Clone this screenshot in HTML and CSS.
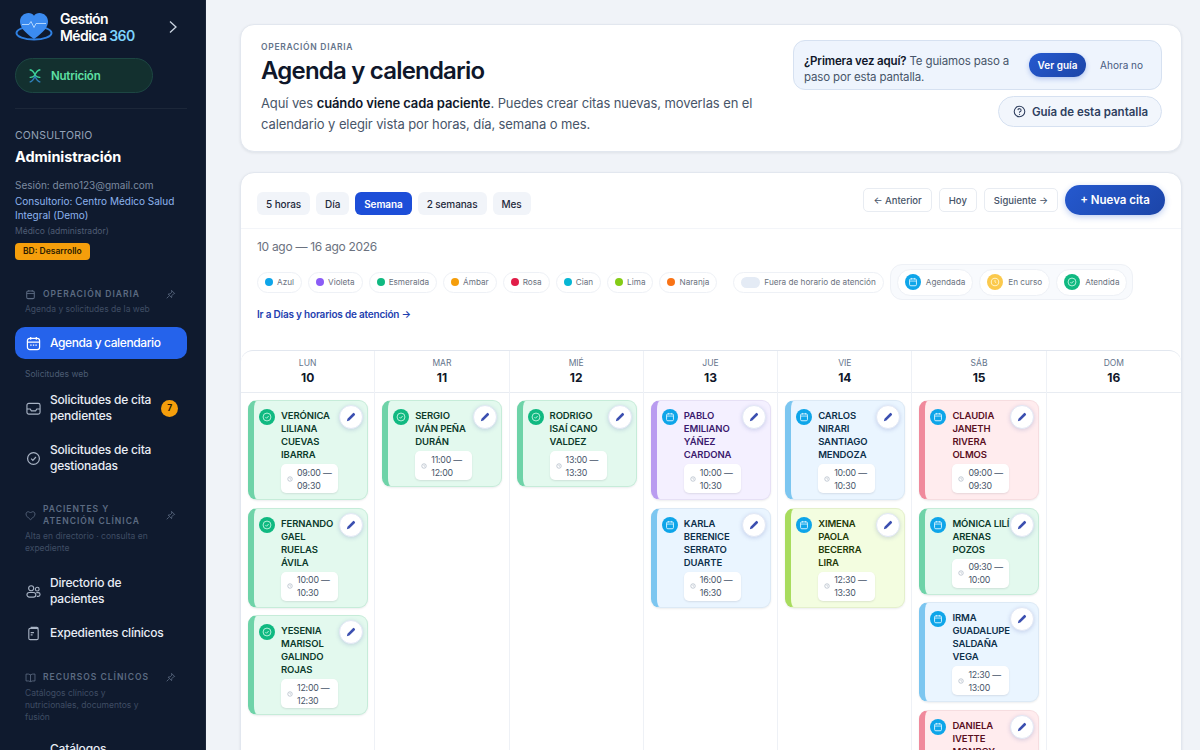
FILE: index.html
```html
<!DOCTYPE html>
<html lang="es">
<head>
    <meta charset="UTF-8">
    <meta name="viewport" content="width=device-width, initial-scale=1.0">
    <title>Agenda y calendario</title>
    <link rel="stylesheet" href="styles.css">
</head>
<body>
    <svg class="defs" width="0" height="0">
        <symbol id="i-cal" viewBox="0 0 16 16"><rect x="2.500" y="3" width="11" height="11" rx="2" fill="none" stroke="currentColor" stroke-width="1.500"/><path d="M2.500 6.500h11M5.500 1.500v2.500M10.500 1.500v2.500" fill="none" stroke="currentColor" stroke-width="1.300"/></symbol>
        <symbol id="i-pin" viewBox="0 0 16 16"><path d="M9.500 2l4.500 4.500-1.500.5-2.500 2.500-.5 3-5-5 3-.5L10 4.500zM5.500 10.500L2.500 13.500" fill="none" stroke="currentColor" stroke-width="1.200" stroke-linejoin="round"/></symbol>
        <symbol id="i-check" viewBox="0 0 16 16"><circle cx="8" cy="8" r="6.300" fill="none" stroke="currentColor" stroke-width="1.300"/><path d="M5.500 8.200l1.800 1.800 3.300-3.600" fill="none" stroke="currentColor" stroke-width="1.300"/></symbol>
        <symbol id="i-pencil" viewBox="0 0 16 16"><path d="M2.500 13.500l.8-3.300L10.500 3a1.300 1.300 0 0 1 1.900 0l.6.6a1.300 1.300 0 0 1 0 1.900l-7.200 7.200z" fill="currentColor"/></symbol>
        <symbol id="i-clock" viewBox="0 0 16 16"><circle cx="8" cy="8" r="6" fill="none" stroke="currentColor" stroke-width="1.700"/><path d="M8 4.800V8l2 1.300" fill="none" stroke="currentColor" stroke-width="1.500"/></symbol>
    </svg>

    <div class="app">
        <aside class="sidebar">
            <div class="brand">
                <svg class="brand-logo" viewBox="0 0 38 30">
                    <ellipse cx="19" cy="21" rx="17.500" ry="6.500" fill="none" stroke="#2f7fe0" stroke-width="2"/>
                    <path d="M19 27C9 20 5 15 5 9.500c0-5 4-8.500 8.500-8.500 2.400 0 4.400 1 5.500 2.700C20.100 2 22.100 1 24.500 1 29 1 33 4.500 33 9.500 33 15 29 20 19 27z" fill="#3b8bf0"/>
                    <path d="M7 12.500h7l2-3 3 6 2-4h10" fill="none" stroke="#bcdcff" stroke-width=".9"/>
                </svg>
                <div class="brand-name">Gestión<br>Médica <span>360</span></div>
                <svg class="brand-chevron" viewBox="0 0 10 14"><path d="M2 1.500L8 7l-6 5.500" fill="none" stroke="#cbd5e1" stroke-width="1.300"/></svg>
            </div>
            <div class="module-pill">
                <svg viewBox="0 0 18 18" width="16" height="16">
                    <path d="M3 2c3 .5 5 3 6 6 1-3 3-5.500 6-6M9 8c-2 2-4 3-6 2.500M9 8c2 2 4 3 6 2.500" fill="none" stroke="#3fd39a" stroke-width="1.500"/>
                    <path d="M9 9c-1 3-3 6-6 7M9 9c1 3 3 6 6 7" fill="none" stroke="#2f7fb8" stroke-width="1.500"/>
                </svg>
                <span>Nutrición</span>
            </div>
            <hr class="side-rule">

            <div class="clinic-label">CONSULTORIO</div>
            <div class="clinic-role">Administración</div>
            <div class="clinic-session">Sesión: demo123@gmail.com</div>
            <div class="clinic-name">Consultorio: Centro Médico Salud Integral (Demo)</div>
            <div class="clinic-user">Médico (administrador)</div>
            <div class="db-badge">BD: Desarrollo</div>

            <div class="nav-group">
                <div class="nav-head">
                    <svg class="nav-head-icon"><use href="#i-cal"/></svg>
                    <span>Operación diaria</span>
                    <svg class="nav-pin"><use href="#i-pin"/></svg>
                </div>
                <p class="nav-sub">Agenda y solicitudes de la web</p>
                <a class="nav-item active">
                    <svg viewBox="0 0 16 16"><rect x="1.500" y="2.500" width="13" height="12" rx="2.500" fill="none" stroke="currentColor" stroke-width="1.300"/><path d="M1.500 6.500h13M5 1v3M11 1v3" fill="none" stroke="currentColor" stroke-width="1.300"/><path d="M4.500 9h1.500v1.500H4.500zM7.300 9h1.500v1.500H7.300zM10 9h1.500v1.500H10z" fill="currentColor"/></svg>
                    <span>Agenda y calendario</span>
                </a>
                <p class="nav-sub nav-sub-item">Solicitudes web</p>
                <a class="nav-item two">
                    <svg viewBox="0 0 16 16"><rect x="1" y="2.500" width="14" height="11.500" rx="2" fill="none" stroke="currentColor" stroke-width="1.200"/><path d="M1 8.500h3.500l1.200 2h4.600l1.200-2H15" fill="none" stroke="currentColor" stroke-width="1.200"/></svg>
                    <span>Solicitudes de cita pendientes</span>
                    <b class="count">7</b>
                </a>
                <a class="nav-item two">
                    <svg><use href="#i-check"/></svg>
                    <span>Solicitudes de cita gestionadas</span>
                </a>
            </div>

            <div class="nav-group patients">
                <div class="nav-head">
                    <svg class="nav-head-icon" viewBox="0 0 16 16"><path d="M8 14C3.500 10.500 1.500 8.500 1.500 5.800 1.500 3.800 3 2.500 4.800 2.500 6.200 2.500 7.300 3.200 8 4.400 8.700 3.200 9.800 2.500 11.200 2.500c1.800 0 3.300 1.300 3.300 3.300 0 2.700-2 4.700-6.500 8.200z" fill="none" stroke="currentColor" stroke-width="1.200"/></svg>
                    <span>Pacientes y atención clínica</span>
                    <svg class="nav-pin"><use href="#i-pin"/></svg>
                </div>
                <p class="nav-sub">Alta en directorio · consulta en expediente</p>
                <a class="nav-item two first">
                    <svg viewBox="0 0 16 16"><circle cx="5.500" cy="4.500" r="2.700" fill="none" stroke="currentColor" stroke-width="1.200"/><circle cx="12" cy="5.500" r="2" fill="none" stroke="currentColor" stroke-width="1.200"/><rect x="1" y="9" width="9.500" height="5" rx="2.500" fill="none" stroke="currentColor" stroke-width="1.200"/><path d="M11 9.200h2a2 2 0 0 1 0 4h-1.500" fill="none" stroke="currentColor" stroke-width="1.200"/></svg>
                    <span>Directorio de pacientes</span>
                </a>
                <a class="nav-item">
                    <svg viewBox="0 0 16 16"><rect x="3" y="2.500" width="10" height="12" rx="1.500" fill="none" stroke="currentColor" stroke-width="1.200"/><path d="M5 1.500h6.500A1.500 1.500 0 0 1 13 3M5 7h3.500M5 9.500h2" fill="none" stroke="currentColor" stroke-width="1.200"/></svg>
                    <span>Expedientes clínicos</span>
                </a>
            </div>

            <div class="nav-group resources">
                <div class="nav-head">
                    <svg class="nav-head-icon" viewBox="0 0 16 16"><path d="M8 4C6.500 3 4 2.800 1.500 3v10C4 12.800 6.500 13 8 14c1.500-1 4-1.200 6.500-1V3C12 2.800 9.500 3 8 4zM8 4v10" fill="none" stroke="currentColor" stroke-width="1.200"/></svg>
                    <span>Recursos clínicos</span>
                    <svg class="nav-pin"><use href="#i-pin"/></svg>
                </div>
                <p class="nav-sub">Catálogos clínicos y nutricionales, documentos y fusión</p>
                <a class="nav-item two first"><svg></svg><span>Catálogos</span></a>
            </div>
        </aside>

        <main class="content">
            <section class="hero">
                <div class="hero-text">
                    <div class="eyebrow">OPERACIÓN DIARIA</div>
                    <h1>Agenda y calendario</h1>
                    <p>Aquí ves <strong>cuándo viene cada paciente</strong>. Puedes crear citas nuevas, moverlas en el calendario y elegir vista por horas, día, semana o mes.</p>
                </div>
                <div class="hero-side">
                    <div class="guide-box">
                        <p><strong>¿Primera vez aquí?</strong> Te guiamos paso a paso por esta pantalla.</p>
                        <button class="btn-guide">Ver guía</button>
                        <button class="btn-later">Ahora no</button>
                    </div>
                    <button class="btn-screen-guide">
                        <svg viewBox="0 0 16 16" width="13" height="13"><circle cx="8" cy="8" r="6.500" fill="none" stroke="currentColor" stroke-width="1.300"/><path d="M6 6.300A2 2 0 1 1 8 8.500v1" fill="none" stroke="currentColor" stroke-width="1.300"/><circle cx="8" cy="11.500" r=".8" fill="currentColor"/></svg>
                        Guía de esta pantalla
                    </button>
                </div>
            </section>

            <section class="panel">
                <div class="toolbar">
                    <div class="tabs">
                        <button class="tab">5 horas</button>
                        <button class="tab">Día</button>
                        <button class="tab active">Semana</button>
                        <button class="tab">2 semanas</button>
                        <button class="tab">Mes</button>
                    </div>
                    <div class="actions">
                        <button class="btn-nav">← Anterior</button>
                        <button class="btn-nav">Hoy</button>
                        <button class="btn-nav">Siguiente →</button>
                        <button class="btn-new">+ Nueva cita</button>
                    </div>
                </div>

                <div class="range">10 ago — 16 ago 2026</div>

                <div class="legend">
                    <span class="chip"><i style="background:#0ea5e9"></i>Azul</span>
                    <span class="chip"><i style="background:#8b5cf6"></i>Violeta</span>
                    <span class="chip"><i style="background:#10b981"></i>Esmeralda</span>
                    <span class="chip"><i style="background:#f59e0b"></i>Ámbar</span>
                    <span class="chip"><i style="background:#e11d48"></i>Rosa</span>
                    <span class="chip"><i style="background:#06b6d4"></i>Cian</span>
                    <span class="chip"><i style="background:#84cc16"></i>Lima</span>
                    <span class="chip"><i style="background:#f97316"></i>Naranja</span>
                    <span class="chip chip-off"><i class="off-swatch"></i>Fuera de horario de atención</span>
                    <div class="status-group">
                        <span class="chip"><b class="status blue"><svg><use href="#i-cal"/></svg></b>Agendada</span>
                        <span class="chip"><b class="status amber"><svg><use href="#i-clock"/></svg></b>En curso</span>
                        <span class="chip"><b class="status green"><svg><use href="#i-check"/></svg></b>Atendida</span>
                    </div>
                </div>

                <a class="hours-link">Ir a Días y horarios de atención →</a>

                <div class="calendar">
                    <div class="day">
                        <div class="day-head"><small>LUN</small><strong>10</strong></div>
                        <div class="day-body">
                            <article class="appt emerald">
                                <b class="status green"><svg><use href="#i-check"/></svg></b>
                                <div class="appt-body"><h3>VERÓNICA<br>LILIANA<br>CUEVAS<br>IBARRA</h3><div class="time"><svg><use href="#i-clock"/></svg><span>09:00 —<br>09:30</span></div></div>
                                <button class="edit"><svg><use href="#i-pencil"/></svg></button>
                            </article>
                            <article class="appt emerald">
                                <b class="status green"><svg><use href="#i-check"/></svg></b>
                                <div class="appt-body"><h3>FERNANDO<br>GAEL<br>RUELAS<br>ÁVILA</h3><div class="time"><svg><use href="#i-clock"/></svg><span>10:00 —<br>10:30</span></div></div>
                                <button class="edit"><svg><use href="#i-pencil"/></svg></button>
                            </article>
                            <article class="appt emerald">
                                <b class="status green"><svg><use href="#i-check"/></svg></b>
                                <div class="appt-body"><h3>YESENIA<br>MARISOL<br>GALINDO<br>ROJAS</h3><div class="time"><svg><use href="#i-clock"/></svg><span>12:00 —<br>12:30</span></div></div>
                                <button class="edit"><svg><use href="#i-pencil"/></svg></button>
                            </article>
                        </div>
                    </div>
                    <div class="day">
                        <div class="day-head"><small>MAR</small><strong>11</strong></div>
                        <div class="day-body">
                            <article class="appt emerald">
                                <b class="status green"><svg><use href="#i-check"/></svg></b>
                                <div class="appt-body"><h3>SERGIO<br>IVÁN PEÑA<br>DURÁN</h3><div class="time"><svg><use href="#i-clock"/></svg><span>11:00 —<br>12:00</span></div></div>
                                <button class="edit"><svg><use href="#i-pencil"/></svg></button>
                            </article>
                        </div>
                    </div>
                    <div class="day">
                        <div class="day-head"><small>MIÉ</small><strong>12</strong></div>
                        <div class="day-body">
                            <article class="appt emerald">
                                <b class="status green"><svg><use href="#i-check"/></svg></b>
                                <div class="appt-body"><h3>RODRIGO<br>ISAÍ CANO<br>VALDEZ</h3><div class="time"><svg><use href="#i-clock"/></svg><span>13:00 —<br>13:30</span></div></div>
                                <button class="edit"><svg><use href="#i-pencil"/></svg></button>
                            </article>
                        </div>
                    </div>
                    <div class="day">
                        <div class="day-head"><small>JUE</small><strong>13</strong></div>
                        <div class="day-body">
                            <article class="appt violet">
                                <b class="status blue"><svg><use href="#i-cal"/></svg></b>
                                <div class="appt-body"><h3>PABLO<br>EMILIANO<br>YÁÑEZ<br>CARDONA</h3><div class="time"><svg><use href="#i-clock"/></svg><span>10:00 —<br>10:30</span></div></div>
                                <button class="edit"><svg><use href="#i-pencil"/></svg></button>
                            </article>
                            <article class="appt azure">
                                <b class="status blue"><svg><use href="#i-cal"/></svg></b>
                                <div class="appt-body"><h3>KARLA<br>BERENICE<br>SERRATO<br>DUARTE</h3><div class="time"><svg><use href="#i-clock"/></svg><span>16:00 —<br>16:30</span></div></div>
                                <button class="edit"><svg><use href="#i-pencil"/></svg></button>
                            </article>
                        </div>
                    </div>
                    <div class="day">
                        <div class="day-head"><small>VIE</small><strong>14</strong></div>
                        <div class="day-body">
                            <article class="appt azure">
                                <b class="status blue"><svg><use href="#i-cal"/></svg></b>
                                <div class="appt-body"><h3>CARLOS<br>NIRARI<br>SANTIAGO<br>MENDOZA</h3><div class="time"><svg><use href="#i-clock"/></svg><span>10:00 —<br>10:30</span></div></div>
                                <button class="edit"><svg><use href="#i-pencil"/></svg></button>
                            </article>
                            <article class="appt lime">
                                <b class="status blue"><svg><use href="#i-cal"/></svg></b>
                                <div class="appt-body"><h3>XIMENA<br>PAOLA<br>BECERRA<br>LIRA</h3><div class="time"><svg><use href="#i-clock"/></svg><span>12:30 —<br>13:30</span></div></div>
                                <button class="edit"><svg><use href="#i-pencil"/></svg></button>
                            </article>
                        </div>
                    </div>
                    <div class="day">
                        <div class="day-head"><small>SÁB</small><strong>15</strong></div>
                        <div class="day-body">
                            <article class="appt rose">
                                <b class="status blue"><svg><use href="#i-cal"/></svg></b>
                                <div class="appt-body"><h3>CLAUDIA<br>JANETH<br>RIVERA<br>OLMOS</h3><div class="time"><svg><use href="#i-clock"/></svg><span>09:00 —<br>09:30</span></div></div>
                                <button class="edit"><svg><use href="#i-pencil"/></svg></button>
                            </article>
                            <article class="appt emerald">
                                <b class="status blue"><svg><use href="#i-cal"/></svg></b>
                                <div class="appt-body"><h3>MÓNICA LILÍ<br>ARENAS<br>POZOS</h3><div class="time"><svg><use href="#i-clock"/></svg><span>09:30 —<br>10:00</span></div></div>
                                <button class="edit"><svg><use href="#i-pencil"/></svg></button>
                            </article>
                            <article class="appt azure">
                                <b class="status blue"><svg><use href="#i-cal"/></svg></b>
                                <div class="appt-body"><h3>IRMA<br>GUADALUPE<br>SALDAÑA<br>VEGA</h3><div class="time"><svg><use href="#i-clock"/></svg><span>12:30 —<br>13:00</span></div></div>
                                <button class="edit"><svg><use href="#i-pencil"/></svg></button>
                            </article>
                            <article class="appt rose">
                                <b class="status blue"><svg><use href="#i-cal"/></svg></b>
                                <div class="appt-body"><h3>DANIELA<br>IVETTE<br>MONROY<br>CRUZ</h3><div class="time"><svg><use href="#i-clock"/></svg><span>16:00 —<br>16:30</span></div></div>
                                <button class="edit"><svg><use href="#i-pencil"/></svg></button>
                            </article>
                        </div>
                    </div>
                    <div class="day">
                        <div class="day-head"><small>DOM</small><strong>16</strong></div>
                        <div class="day-body"></div>
                    </div>
                </div>
            </section>
        </main>
    </div>
</body>
</html>
```

FILE: styles.css
```css
* {
    box-sizing: border-box;
}
html, body {
    height: 100%;
}
body {
    margin: 0;
    overflow: hidden;
    font-family: Inter, "Noto Sans", sans-serif;
    color: #0f172a;
    background-color: #f0f3f8;
}
button {
    font-family: inherit;
    cursor: pointer;
}
p, h1, h3 {
    margin: 0;
}
.defs {
    position: absolute;
}
.app {
    display: flex;
    height: 750px;
    overflow: hidden;
}

/* barra lateral */
.sidebar {
    flex: 0 0 206px;
    height: 750px;
    padding: 12px 18px 0 15px;
    overflow: hidden;
    background-color: #0f1a2e;
    border-right: 1px solid #1b2538;
    color: #fff;
}
.brand {
    display: flex;
    align-items: center;
    height: 30px;
}
.brand-logo {
    flex: 0 0 38px;
    width: 38px;
    height: 30px;
}
.brand-name {
    margin-left: 7px;
    font-size: 14px;
    font-weight: 600;
    line-height: 17px;
    letter-spacing: -0.6px;
}
.brand-name span {
    color: #7dd3fc;
}
.brand-chevron {
    width: 10px;
    height: 14px;
    margin-left: auto;
    margin-right: 9px;
}
.module-pill {
    display: flex;
    align-items: center;
    gap: 8px;
    width: 138px;
    height: 35px;
    margin-top: 16px;
    padding-left: 11px;
    background-color: #13302f;
    border: 1px solid #1d4643;
    border-radius: 18px;
    color: #5fe0a4;
    font-size: 11.500px;
    font-weight: 600;
    letter-spacing: -0.2px;
}
.side-rule {
    height: 1px;
    margin: 15px 0 0;
    background-color: #1c2739;
    border: 0;
}
.clinic-label {
    margin-top: 20px;
    font-size: 10.500px;
    line-height: 13px;
    color: #94a3b8;
    letter-spacing: 0.2px;
}
.clinic-role {
    margin-top: 5px;
    font-size: 14.500px;
    font-weight: 700;
    line-height: 20px;
    letter-spacing: -0.1px;
}
.clinic-session {
    margin-top: 11px;
    font-size: 10px;
    line-height: 15px;
    color: #7c8aa0;
}
.clinic-name {
    margin-top: 1px;
    font-size: 10px;
    line-height: 14px;
    color: #8db4ef;
}
.clinic-user {
    margin-top: 2px;
    font-size: 8.500px;
    line-height: 14px;
    color: #4f5d74;
}
.db-badge {
    display: inline-block;
    height: 17px;
    margin-top: 5px;
    padding: 0 8px;
    background-color: #f59e0b;
    border-radius: 4px;
    color: #2b1a00;
    font-size: 8.500px;
    font-weight: 600;
    line-height: 17px;
}
.nav-group {
    margin-top: 28px;
}
.nav-head {
    display: flex;
    align-items: center;
    padding-left: 10px;
    color: #5c6b82;
    font-size: 8.500px;
    font-weight: 600;
    line-height: 12px;
    letter-spacing: 1px;
    text-transform: uppercase;
}
.nav-head span {
    width: 118px;
    margin-left: 7px;
}
.nav-head-icon {
    flex: 0 0 11px;
    width: 11px;
    height: 11px;
}
.nav-pin {
    flex: 0 0 11px;
    width: 11px;
    height: 11px;
    margin-left: 4px;
}
.nav-sub {
    margin-top: 3px;
    padding: 0 10px;
    font-size: 8.500px;
    line-height: 12px;
    color: #3f4d64;
}
.nav-sub-item {
    margin-top: 9px;
    color: #4b5a72;
}
.nav-item {
    display: flex;
    align-items: center;
    min-height: 32px;
    margin-top: 12px;
    padding: 0 9px 0 11px;
    border-radius: 10px;
    color: #e8edf5;
    font-size: 12px;
    font-weight: 500;
    line-height: 16px;
    letter-spacing: -0.2px;
}
.nav-item svg {
    flex: 0 0 15px;
    width: 15px;
    height: 15px;
    margin-right: 9px;
    color: #a8b3c4;
}
.nav-item.active {
    background-color: #2563eb;
    color: #fff;
    letter-spacing: -0.4px;
}
.nav-item.active svg {
    color: #fff;
}
.nav-item.two {
    margin-top: 0;
    padding-top: 9px;
    padding-bottom: 9px;
}
.nav-sub-item + .nav-item.two {
    margin-top: 3px;
}
.count {
    flex: 0 0 17px;
    width: 17px;
    height: 17px;
    margin-left: auto;
    background-color: #f59e0b;
    border-radius: 50%;
    color: #2b1a00;
    font-size: 8.500px;
    line-height: 17px;
    text-align: center;
}
.patients {
    margin-top: 20px;
}
.patients .nav-item.first {
    margin-top: 12px;
}
.patients .nav-item:last-child {
    margin-top: 1px;
}
.resources {
    margin-top: 22px;
}
.resources .nav-sub {
    margin-top: 4px;
    padding-right: 30px;
}
.resources .nav-item.first {
    margin-top: 9px;
}

/* contenido */
.content {
    flex: 1;
    min-width: 0;
    padding: 24px 18px 0 34px;
}
.hero {
    display: flex;
    justify-content: space-between;
    height: 128px;
    padding: 16px 19px 0 20px;
    background-color: #fff;
    border: 1px solid #e2e7ef;
    border-radius: 14px;
    box-shadow: 0 1px 3px rgba(15, 23, 42, 0.08);
}
.hero-text {
    width: 510px;
}
.eyebrow {
    font-size: 8.500px;
    font-weight: 600;
    line-height: 12px;
    letter-spacing: 0.7px;
    color: #64748b;
}
.hero h1 {
    margin-top: 3px;
    font-size: 24px;
    font-weight: 600;
    line-height: 30px;
    letter-spacing: -0.8px;
}
.hero p {
    margin-top: 7px;
    font-size: 13px;
    line-height: 21px;
    color: #475569;
    letter-spacing: -0.1px;
}
.hero p strong {
    color: #0f172a;
    font-weight: 600;
}
.hero-side {
    display: flex;
    flex-direction: column;
    align-items: flex-end;
    gap: 6px;
    margin-top: -1px;
}
.guide-box {
    display: flex;
    align-items: center;
    width: 369px;
    height: 50px;
    padding: 0 18px 0 10px;
    background-color: #eef4fd;
    border: 1px solid #d6e1f1;
    border-radius: 12px;
}
.guide-box p {
    width: 225px;
    font-size: 11.500px;
    line-height: 16px;
    color: #475569;
    letter-spacing: -0.15px;
}
.guide-box strong {
    color: #0f172a;
    font-weight: 600;
}
.btn-guide {
    width: 57px;
    height: 24px;
    padding: 0;
    background: linear-gradient(135deg, #2559cf, #1c45a8);
    border: 0;
    border-radius: 12px;
    box-shadow: 0 2px 5px rgba(37, 89, 207, 0.3);
    color: #fff;
    font-size: 10px;
    font-weight: 600;
}
.btn-later {
    margin-left: auto;
    padding: 0;
    background: none;
    border: 0;
    color: #475a80;
    font-size: 10px;
}
.btn-screen-guide {
    display: flex;
    align-items: center;
    gap: 6px;
    height: 31px;
    padding: 0 13px 0 14px;
    background-color: #f2f6fc;
    border: 1px solid #d6e1f1;
    border-radius: 16px;
    color: #2f3f5f;
    font-size: 11.500px;
    font-weight: 600;
}
.panel {
    height: 620px;
    margin-top: 20px;
    background-color: #fff;
    border: 1px solid #e2e7ef;
    border-radius: 14px;
    box-shadow: 0 1px 3px rgba(15, 23, 42, 0.08);
}
.toolbar {
    display: flex;
    justify-content: space-between;
    align-items: flex-start;
    height: 56px;
    padding: 0 16px;
    border-bottom: 1px solid #f3f5f9;
}
.tabs, .actions {
    display: flex;
    align-items: center;
}
.tabs {
    gap: 6px;
    margin-top: 19px;
}
.actions {
    gap: 7px;
    margin-top: 12px;
}
.tab {
    height: 23px;
    padding: 0 9px;
    background-color: #f1f4f9;
    border: 0;
    border-radius: 6px;
    color: #1e293b;
    font-size: 10px;
    font-weight: 500;
    letter-spacing: -0.1px;
}
.tab.active {
    background-color: #1d4ed8;
    color: #fff;
    font-weight: 600;
}
.btn-nav {
    height: 24px;
    padding: 0 9px;
    background-color: #fff;
    border: 1px solid #e8ecf2;
    border-radius: 5px;
    color: #475569;
    font-size: 9.500px;
    font-weight: 500;
}
.btn-new {
    width: 100px;
    height: 30px;
    padding: 0;
    background: linear-gradient(135deg, #2559cf, #1c45a8);
    border: 0;
    border-radius: 15px;
    box-shadow: 0 2px 6px rgba(37, 89, 207, 0.3);
    color: #fff;
    font-size: 11.500px;
    font-weight: 600;
}
.range {
    margin: 10px 16px 0;
    font-size: 12px;
    line-height: 16px;
    color: #6b7280;
    letter-spacing: -0.3px;
}
.legend {
    display: flex;
    align-items: center;
    gap: 6px;
    height: 36px;
    margin: 9px 16px 0;
}
.chip {
    display: inline-flex;
    align-items: center;
    gap: 4px;
    height: 21px;
    padding: 0 7px;
    background-color: #fff;
    border: 1px solid #eef1f6;
    border-radius: 11px;
    color: #6b7280;
    font-size: 8.200px;
    white-space: nowrap;
}
.chip i {
    width: 8px;
    height: 8px;
    border-radius: 50%;
}
.chip i.off-swatch {
    width: 19px;
    height: 11px;
    background-color: #e4ebf5;
    border-radius: 6px;
}
.chip-off {
    margin-left: 10px;
}
.status-group {
    display: flex;
    align-items: center;
    gap: 6px;
    height: 36px;
    padding: 0 5px 0 6px;
    background-color: #f8fafd;
    border: 1px solid #eef1f6;
    border-radius: 12px;
}
.status-group .chip {
    gap: 5px;
    height: 27px;
    border-radius: 14px;
}
.status {
    display: flex;
    align-items: center;
    justify-content: center;
    flex: 0 0 16px;
    width: 16px;
    height: 16px;
    border-radius: 50%;
    color: #d8f3ff;
}
.status svg {
    width: 10px;
    height: 10px;
}
.status.blue {
    background-color: #0ea5e9;
}
.status.amber {
    background-color: #fbc94c;
    color: #fff2c4;
}
.status.green {
    background-color: #10b981;
    color: #d9fbeb;
}
.hours-link {
    display: block;
    margin: 7px 16px 0;
    font-size: 10px;
    font-weight: 600;
    line-height: 14px;
    letter-spacing: -0.2px;
    color: #1e40af;
}
.calendar {
    display: grid;
    grid-template-columns: repeat(7, minmax(0, 1fr));
    height: 420px;
    margin-top: 29px;
    border-top: 1px solid #e2e7ef;
    border-radius: 12px 12px 0 0;
}
.day {
    border-right: 1px solid #eef1f6;
}
.day:last-child {
    border-right: 0;
}
.day-head {
    display: flex;
    flex-direction: column;
    align-items: center;
    height: 42px;
    padding-top: 6px;
    border-bottom: 1px solid #e8ecf2;
}
.day-head small {
    font-size: 8.500px;
    line-height: 12px;
    color: #64748b;
}
.day-head strong {
    font-size: 12px;
    font-weight: 700;
    line-height: 17px;
}
.day-body {
    display: flex;
    flex-direction: column;
    gap: 7.500px;
    padding: 7px 7px 0;
}
.appt {
    position: relative;
    display: flex;
    flex-shrink: 0;
    gap: 6px;
    width: 120px;
    padding: 8px 0 6px 5px;
    background-color: #eaf5ff;
    border: 1px solid #dce9f5;
    border-left: 6px solid #7cc6f0;
    border-radius: 9px;
    box-shadow: 0 1px 2px rgba(15, 23, 42, 0.08);
}
.appt h3 {
    font-size: 9.500px;
    font-weight: 600;
    line-height: 13px;
    letter-spacing: -0.1px;
    white-space: nowrap;
    color: #0c2f4a;
}
.appt.emerald {
    background-color: #e3f9ee;
    border-color: #c6ecd9;
    border-left-color: #6ed3a8;
}
.appt.emerald h3 {
    color: #0b3a2a;
}
.appt.violet {
    background-color: #f4f0ff;
    border-color: #e6e0f5;
    border-left-color: #b99cf0;
}
.appt.violet h3 {
    color: #3b1a6e;
}
.appt.lime {
    background-color: #f3fde0;
    border-color: #e4f0cc;
    border-left-color: #a8dc5e;
}
.appt.lime h3 {
    color: #1f3a08;
}
.appt.rose {
    background-color: #ffecee;
    border-color: #f6dde0;
    border-left-color: #f08a9c;
}
.appt.rose h3 {
    color: #5a0f1f;
}
.time {
    display: flex;
    align-items: center;
    gap: 4px;
    width: 57px;
    height: 29px;
    margin-top: 3px;
    padding-left: 6px;
    background-color: #fff;
    border-radius: 5px;
    box-shadow: 0 1px 2px rgba(15, 23, 42, 0.1);
    color: #475569;
    font-size: 8.800px;
    line-height: 13px;
    letter-spacing: -0.2px;
}
.time svg {
    flex: 0 0 6px;
    width: 6px;
    height: 6px;
    color: #a3afbf;
}
.edit {
    position: absolute;
    top: 4px;
    right: 4px;
    display: flex;
    align-items: center;
    justify-content: center;
    width: 24px;
    height: 24px;
    padding: 0;
    background-color: #fff;
    border: 1px solid #e2e8f5;
    border-radius: 50%;
    box-shadow: 0 1px 4px rgba(49, 70, 160, 0.2);
    color: #3b4fb0;
}
.edit svg {
    width: 12px;
    height: 12px;
}
```
